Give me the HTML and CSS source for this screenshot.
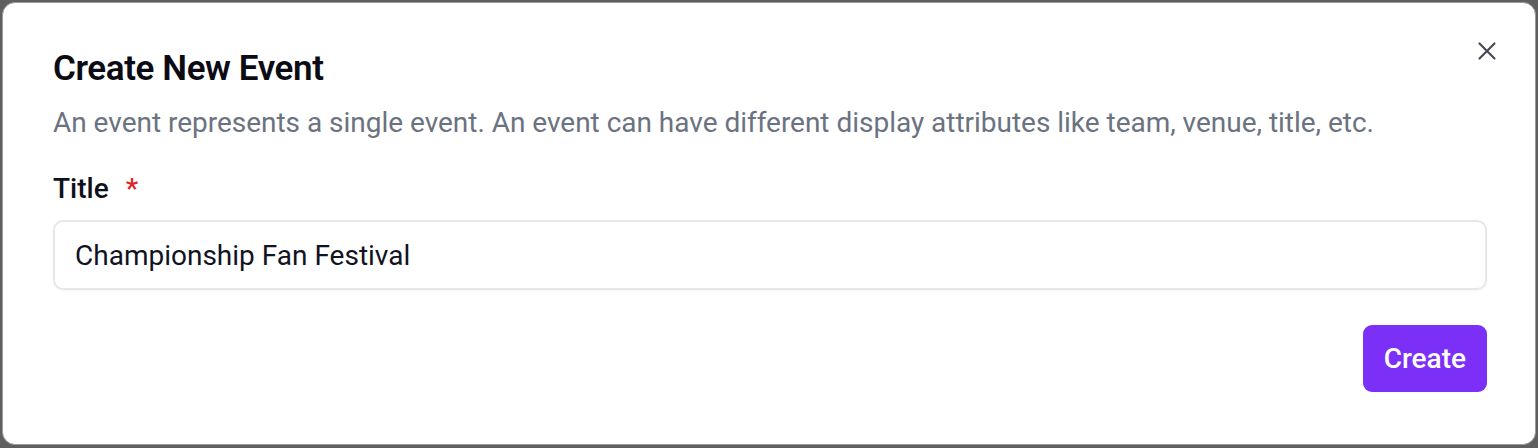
FILE: index.html
```html
<!DOCTYPE html>
<html lang="en">
<head>
<meta charset="utf-8">
<title>Create New Event</title>
<link rel="stylesheet" href="styles.css">
</head>
<body>
<div class="backdrop">
  <div class="modal" role="dialog">
    <button class="close" aria-label="Close">
      <svg viewBox="0 0 24 24" width="24" height="24" fill="none" stroke="currentColor" stroke-width="2.6" stroke-linecap="round"><path d="M3 3L21 21M21 3L3 21"/></svg>
    </button>
    <h2 class="heading">Create New Event</h2>
    <p class="desc">An event represents a single event. An event can have different display attributes like team, venue, title, etc.</p>
    <label class="label">Title <span class="req">*</span></label>
    <div class="input">Championship Fan Festival</div>
    <div class="actions">
      <button class="primary">Create</button>
    </div>
  </div>
</div>
</body>
</html>
```
FILE: styles.css
```css
html, body {
  margin: 0;
  padding: 0;
  height: 448px;
  overflow: hidden;
}
body {
  background: #5f5f5f;
  font-family: Roboto, "Liberation Sans", sans-serif;
}
.backdrop {
  box-sizing: border-box;
  height: 448px;
  padding: 2px 2px 3px 2px;
}
.modal {
  position: relative;
  box-sizing: border-box;
  height: 443px;
  background: #ffffff;
  border: 1px solid #9a9a9a;
  border-radius: 13px;
  padding: 45px 48px 0 50px;
  display: flex;
  flex-direction: column;
}
.close {
  position: absolute;
  top: 33px;
  right: 33px;
  width: 30px;
  height: 30px;
  padding: 0;
  border: 0;
  background: transparent;
  color: #474a52;
  display: flex;
  align-items: center;
  justify-content: center;
}
.close svg {
  width: 20px;
  height: 20px;
}
.heading {
  margin: 0;
  font-size: 35px;
  line-height: 42px;
  font-weight: 600;
  letter-spacing: -0.4px;
  color: #0b0b14;
}
.desc {
  margin: 15px 0 0 0;
  font-size: 28px;
  line-height: 35px;
  letter-spacing: -0.02px;
  color: #6b7280;
}
.label {
  margin-top: 28px;
  font-size: 28px;
  line-height: 42px;
  font-weight: 500;
  color: #0f111a;
}
.req {
  color: #dc2626;
  margin-left: 10px;
}
.input {
  margin-top: 10px;
  box-sizing: border-box;
  height: 70px;
  border: 2px solid #e6e7eb;
  border-radius: 10px;
  padding: 0 20px;
  display: flex;
  align-items: center;
  font-size: 28px;
  color: #111322;
  box-shadow: 0 1px 2px rgba(0,0,0,0.04);
}
.actions {
  margin-top: 35px;
  display: flex;
  justify-content: flex-end;
}
.primary {
  height: 67px;
  padding: 0 21px;
  border: 0;
  border-radius: 9px;
  background: #7b2ff7;
  color: #ffffff;
  font-family: Roboto, "Liberation Sans", sans-serif;
  font-size: 28px;
  font-weight: 500;
}
```
